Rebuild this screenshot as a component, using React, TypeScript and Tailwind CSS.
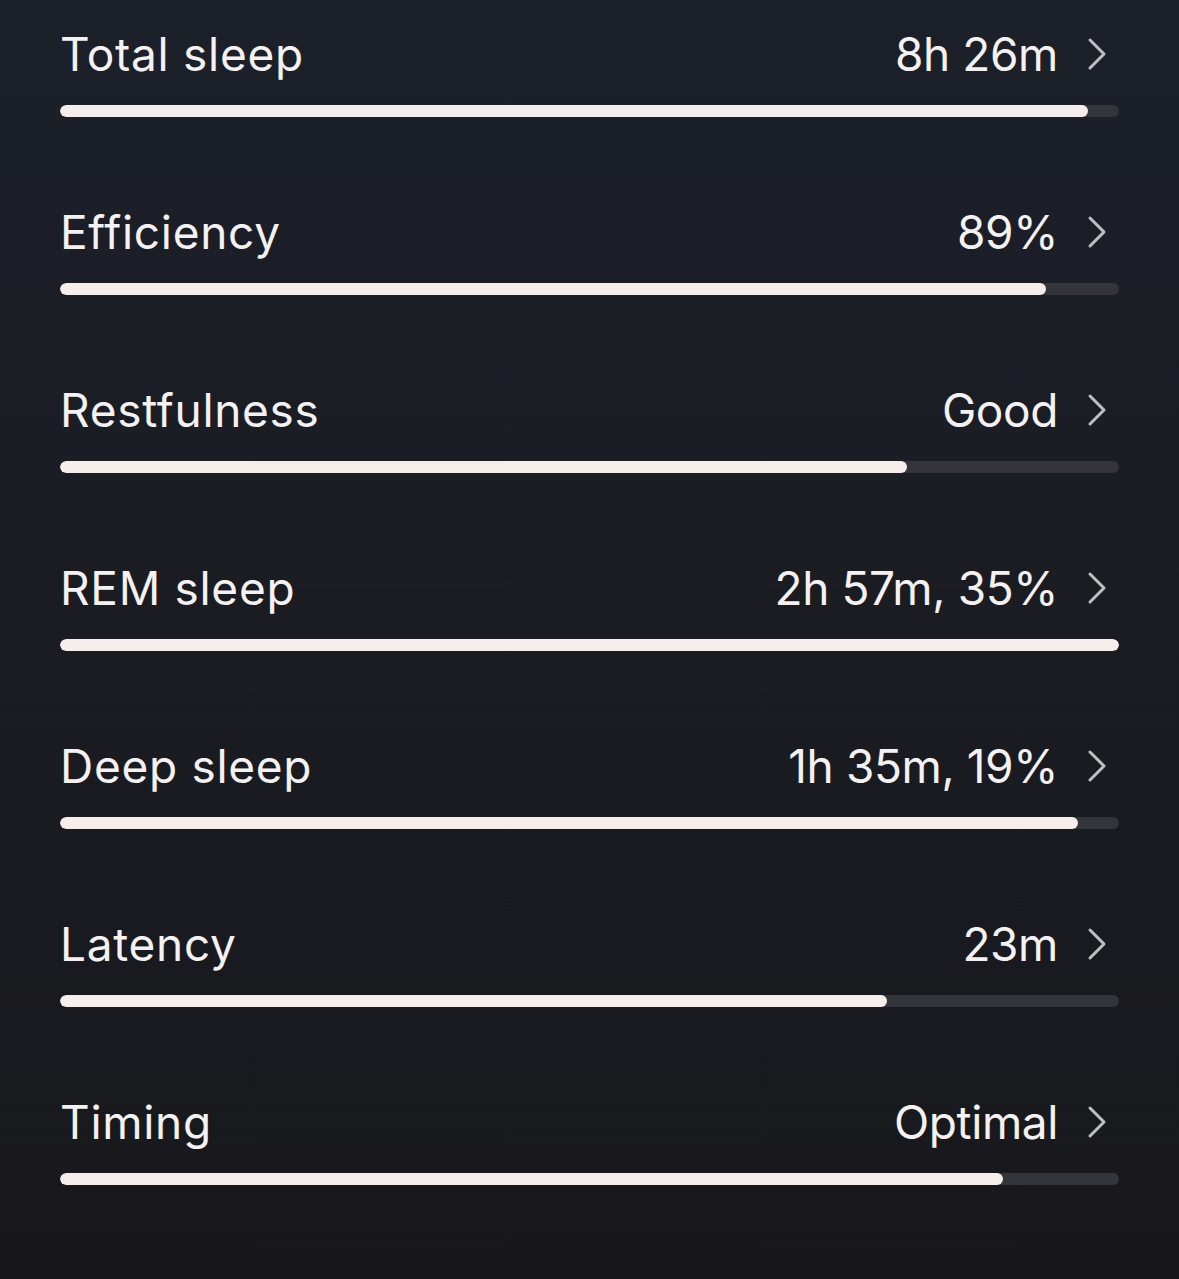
import React from "react";

type Metric = {
  label: string;
  value: string;
  pct: number;
};

const metrics: Metric[] = [
  { label: "Total sleep", value: "8h 26m", pct: 97.1 },
  { label: "Efficiency", value: "89%", pct: 93.1 },
  { label: "Restfulness", value: "Good", pct: 80 },
  { label: "REM sleep", value: "2h 57m, 35%", pct: 100 },
  { label: "Deep sleep", value: "1h 35m, 19%", pct: 96.1 },
  { label: "Latency", value: "23m", pct: 78.1 },
  { label: "Timing", value: "Optimal", pct: 89 },
];

function Chevron() {
  return (
    <svg width="20" height="34" viewBox="0 0 20 34" fill="none" className="text-[#bfbfc2]">
      <path d="M3 3 L17 17 L3 31" stroke="currentColor" strokeWidth="3" strokeLinecap="round" strokeLinejoin="round" />
    </svg>
  );
}

function MetricRow({ label, value, pct }: Metric) {
  return (
    <div className="h-[178px] flex flex-col">
      <div className="flex items-center justify-between h-[56px]">
        <span className="text-[46px] leading-none tracking-[0.7px] text-[#f3f1f1]">{label}</span>
        <div className="flex items-center gap-[29px] pr-[12px]">
          <span className="text-[46px] leading-none tracking-[-0.4px] text-[#f3f1f1]">{value}</span>
          <Chevron />
        </div>
      </div>
      <div className="mt-[23px] h-[12px] w-full rounded-full bg-[#34353b] overflow-hidden">
        <div className="h-full rounded-full bg-[#f6eeeb]" style={{ width: `${pct}%` }} />
      </div>
    </div>
  );
}

export default function App() {
  return (
    <div
      className="w-[1179px] h-[1279px] overflow-hidden bg-gradient-to-b from-[#1c2029] via-[#1a1c22] to-[#18181c] px-[60px] pt-[26px]"
      style={{ fontFamily: "Inter, 'Open Sans', sans-serif" }}
    >
      {metrics.map((m) => (
        <MetricRow key={m.label} {...m} />
      ))}
    </div>
  );
}
